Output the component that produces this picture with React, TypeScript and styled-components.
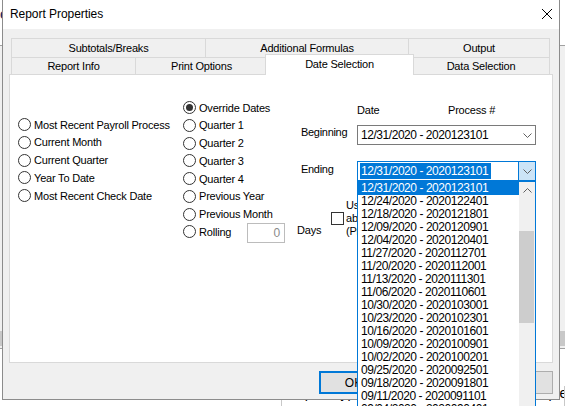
import React from "react";
import styled, { createGlobalStyle } from "styled-components";

const Global = createGlobalStyle`
  html, body { margin: 0; padding: 0; width: 565px; height: 406px; overflow: hidden; background: #fff; }
  body { font-family: "Liberation Sans", Arial, sans-serif; font-size: 11px; color: #000; }
  #root { width: 565px; height: 406px; }
  * { box-sizing: border-box; }
`;

const FONT = `"Liberation Sans", Arial, sans-serif`;

/* ---------- background application ---------- */
const Desktop = styled.div`
  position: relative;
  width: 565px;
  height: 406px;
  overflow: hidden;
  display: flex;
  flex-direction: column;
  background: #fff;
`;
const AppTop = styled.div`
  height: 47px;
  background: #fff;
  border-bottom: 1px solid #a0a0a0;
  color: #1b2a6b;
  font-weight: bold;
  font-size: 14px;
  padding: 6px 0 0 0;
`;
const AppMain = styled.div`
  height: 295px;
  background: #f0f0f0;
`;
const AppBar = styled.div`
  height: 16px;
  background: #c8c8c8;
`;
const AppSep = styled.div`
  height: 3px;
  border-bottom: 1px solid #a0a0a0;
  background: #f0f0f0;
`;
const AppGrid = styled.div`
  flex: 1;
  background: #fff;
  display: flex;
  align-items: flex-start;
  padding-top: 37px;
`;
const AppCol = styled.div<{ $w: number }>`
  width: ${(p) => p.$w}px;
  padding-left: 5px;
  font-size: 14px;
  line-height: 14px;
  border-right: 1px solid #c8c8c8;
  height: 20px;
  white-space: nowrap;
  overflow: hidden;
`;

/* ---------- dialog ---------- */
const Dialog = styled.div`
  position: absolute;
  left: 2px;
  top: 0;
  width: 558px;
  height: 400px;
  border: 1px solid #8c8c8c;
  border-top: none;
  background: #f0f0f0;
  display: flex;
  flex-direction: column;
  font-family: ${FONT};
`;
const TitleBar = styled.div`
  height: 29px;
  background: #fff;
  display: flex;
  align-items: center;
  justify-content: space-between;
  padding: 0 7px 1px 7px;
  font-size: 12px;
  letter-spacing: -0.05px;
`;
const CloseBox = styled.div`
  width: 10px;
  height: 10px;
  margin-right: 0px;
  display: flex;
`;
const Body = styled.div`
  flex: 1;
  padding: 9px 6px 0 6px;
  display: flex;
  flex-direction: column;
`;
const TabRow = styled.div<{ $h: number }>`
  display: flex;
  margin: 0 2px;
  height: ${(p) => p.$h}px;
`;
const Tab = styled.div<{ $w: number; $sel?: boolean; $last?: boolean }>`
  width: ${(p) => p.$w + (p.$sel ? 4 : 0)}px;
  margin: ${(p) => (p.$sel ? "-3px -2px -1px -2px" : "0")};
  position: relative;
  z-index: ${(p) => (p.$sel ? 2 : 1)};
  background: ${(p) => (p.$sel ? "#fff" : "#f0f0f0")};
  border-top: 1px solid #d9d9d9;
  border-left: 1px solid #d9d9d9;
  border-right: ${(p) => (p.$last || p.$sel ? "1px solid #d9d9d9" : "none")};
  display: flex;
  align-items: ${(p) => (p.$sel ? "flex-start" : "center")};
  padding-top: ${(p) => (p.$sel ? "2px" : "0")};
  justify-content: center;
  font-size: 11px;
  letter-spacing: -0.2px;
  line-height: 14px;
`;
const Panel = styled.div`
  height: 289px;
  background: #fff;
  border: 1px solid #d9d9d9;
  display: flex;
  align-items: flex-start;
  padding-left: 8px;
`;

/* radio groups */
const RadioGroup = styled.div<{ $w: number; $top: number }>`
  width: ${(p) => p.$w}px;
  margin-top: ${(p) => p.$top}px;
  display: flex;
  flex-direction: column;
`;
const RadioRow = styled.div`
  height: 17.75px;
  display: flex;
  align-items: center;
  font-size: 11px;
  letter-spacing: -0.2px;
  white-space: nowrap;
`;
const RadioCircle = styled.span<{ $on?: boolean }>`
  width: 13px;
  height: 13px;
  border-radius: 50%;
  border: 1px solid #333;
  background: #fff;
  display: flex;
  align-items: center;
  justify-content: center;
  flex-shrink: 0;
  margin-right: 3px;
  &::after {
    content: "";
    display: ${(p) => (p.$on ? "block" : "none")};
    width: 7px;
    height: 7px;
    border-radius: 50%;
    background: #333;
  }
`;
const RadioLabel = styled.span<{ $w?: number }>`
  display: inline-block;
  width: ${(p) => (p.$w ? `${p.$w}px` : "auto")};
`;
const NumBox = styled.div`
  width: 38px;
  height: 20px;
  border: 1px solid #bcbcbc;
  background: #fff;
  color: #8a8a8a;
  font-size: 12px;
  display: flex;
  align-items: center;
  justify-content: flex-end;
  padding-right: 4px;
  margin-top: 2px;
`;

/* right area */
const RightArea = styled.div`
  display: flex;
  flex-direction: column;
  width: 240px;
`;
const HeaderRow = styled.div`
  margin-top: 28px;
  height: 14px;
  line-height: 14px;
  padding-left: 60px;
  display: flex;
  font-size: 11px;
  letter-spacing: -0.2px;
`;
const HeaderCell = styled.span<{ $w?: number }>`
  width: ${(p) => (p.$w ? `${p.$w}px` : "auto")};
`;
const FieldRow = styled.div<{ $top: number }>`
  margin-top: ${(p) => p.$top}px;
  display: flex;
  align-items: flex-start;
`;
const FieldLabel = styled.span<{ $pt: number }>`
  width: 60px;
  padding-left: 4px;
  padding-top: ${(p) => p.$pt}px;
  line-height: 14px;
  font-size: 11px;
  letter-spacing: -0.3px;
`;
const Combo = styled.div<{ $focus?: boolean }>`
  position: relative;
  width: 179px;
  height: 20px;
  border: 1px solid ${(p) => (p.$focus ? "#0078d7" : "#7a7a7a")};
  background: #fff;
  display: flex;
  align-items: stretch;
`;
const ComboText = styled.div`
  flex: 1;
  display: flex;
  align-items: center;
  padding-left: 2px;
  font-size: 12px;
  letter-spacing: -0.45px;
  white-space: nowrap;
`;
const SelText = styled.span<{ $on?: boolean }>`
  padding: 1px ${(p) => (p.$on ? "3px 1px 1px" : "1px")};
  line-height: 14px;
  background: ${(p) => (p.$on ? "#0078d7" : "transparent")};
  color: ${(p) => (p.$on ? "#fff" : "#000")};
`;
const ComboButton = styled.div<{ $focus?: boolean }>`
  width: 17px;
  display: flex;
  align-items: center;
  justify-content: center;
  background: ${(p) => (p.$focus ? "#cce4f7" : "transparent")};
  border-left: 1px solid ${(p) => (p.$focus ? "#0078d7" : "transparent")};
`;
const DropList = styled.div`
  position: absolute;
  z-index: 20;
  left: -1px;
  top: 19px;
  width: 179px;
  height: 240px;
  background: #fff;
  border: 1px solid #0078d7;
  display: flex;
  overflow: hidden;
`;
const ListItems = styled.div`
  flex: 1;
  display: flex;
  flex-direction: column;
`;
const ListItem = styled.div<{ $sel?: boolean }>`
  height: 13px;
  line-height: 13px;
  padding-left: 3px;
  font-size: 12px;
  letter-spacing: -0.45px;
  white-space: nowrap;
  background: ${(p) => (p.$sel ? "#0078d7" : "transparent")};
  color: ${(p) => (p.$sel ? "#fff" : "#000")};
`;
const ScrollBar = styled.div`
  width: 16px;
  background: #f0f0f0;
  display: flex;
  flex-direction: column;
`;
const ScrollArrow = styled.div`
  height: 17px;
  display: flex;
  align-items: center;
  justify-content: center;
`;
const ScrollThumb = styled.div`
  margin: 32px 1px 0 0;
  height: 92px;
  background: #cdcdcd;
`;

const BottomBlock = styled.div`
  margin-top: 17.5px;
  display: flex;
  align-items: flex-start;
`;
const DaysLabel = styled.span`
  width: 34px;
  margin-top: 24.5px;
  line-height: 14px;
  font-size: 11px;
  letter-spacing: -0.2px;
`;
const CheckBox = styled.span`
  width: 13px;
  height: 13px;
  border: 1px solid #333;
  background: #fff;
  margin-top: 13.5px;
  margin-right: 2px;
  flex-shrink: 0;
`;
const CheckLabel = styled.span`
  font-size: 11px;
  line-height: 13px;
  letter-spacing: -0.2px;
  white-space: nowrap;
`;

/* buttons */
const ButtonRow = styled.div`
  margin-top: 8px;
  display: flex;
  justify-content: flex-end;
  gap: 4.5px;
`;
const Button = styled.div<{ $default?: boolean }>`
  width: 75px;
  height: 23px;
  background: #e1e1e1;
  border: ${(p) => (p.$default ? "2px solid #0078d7" : "1px solid #adadad")};
  display: flex;
  align-items: center;
  justify-content: center;
  font-size: 12px;
  padding-right: 6px;
`;

const Chevron = ({ up }: { up?: boolean }) => (
  <svg width="9" height="5" viewBox="0 0 9 5">
    <path
      d={up ? "M0.5 4.5 L4.5 0.5 L8.5 4.5" : "M0.5 0.5 L4.5 4.5 L8.5 0.5"}
      fill="none"
      stroke="#606060"
      strokeWidth="1"
    />
  </svg>
);

const dates: [string, string][] = [
  ["12/31/2020", "2020123101"],
  ["12/24/2020", "2020122401"],
  ["12/18/2020", "2020121801"],
  ["12/09/2020", "2020120901"],
  ["12/04/2020", "2020120401"],
  ["11/27/2020", "2020112701"],
  ["11/20/2020", "2020112001"],
  ["11/13/2020", "2020111301"],
  ["11/06/2020", "2020110601"],
  ["10/30/2020", "2020103001"],
  ["10/23/2020", "2020102301"],
  ["10/16/2020", "2020101601"],
  ["10/09/2020", "2020100901"],
  ["10/02/2020", "2020100201"],
  ["09/25/2020", "2020092501"],
  ["09/18/2020", "2020091801"],
  ["09/11/2020", "2020091101"],
  ["09/04/2020", "2020090401"],
  ["08/28/2020", "2020082801"],
];

const leftRadios = [
  "Most Recent Payroll Process",
  "Current Month",
  "Current Quarter",
  "Year To Date",
  "Most Recent Check Date",
];
const midRadios = [
  "Override Dates",
  "Quarter 1",
  "Quarter 2",
  "Quarter 3",
  "Quarter 4",
  "Previous Year",
  "Previous Month",
];

export default function App() {
  return (
    <>
      <Global />
      <Desktop>
        <AppTop>e</AppTop>
        <AppMain />
        <AppBar />
        <AppSep />
        <AppGrid>
          <AppCol $w={287}>Name</AppCol>
          <AppCol $w={248}>Report Type</AppCol>
          <AppCol $w={40}>Copies</AppCol>
        </AppGrid>

        <Dialog>
          <TitleBar>
            <span>Report Properties</span>
            <CloseBox>
              <svg width="10" height="10" viewBox="0 0 10 10">
                <path d="M0 0 L10 10 M10 0 L0 10" stroke="#000" strokeWidth="1" />
              </svg>
            </CloseBox>
          </TitleBar>
          <Body>
            <TabRow $h={19}>
              <Tab $w={194}>Subtotals/Breaks</Tab>
              <Tab $w={203}>Additional Formulas</Tab>
              <Tab $w={142} $last>
                Output
              </Tab>
            </TabRow>
            <TabRow $h={17}>
              <Tab $w={124}>Report Info</Tab>
              <Tab $w={132}>Print Options</Tab>
              <Tab $w={145} $sel>
                Date Selection
              </Tab>
              <Tab $w={138} $last>
                Data Selection
              </Tab>
            </TabRow>
            <Panel>
              <RadioGroup $w={165} $top={40.8}>
                {leftRadios.map((l) => (
                  <RadioRow key={l}>
                    <RadioCircle />
                    <RadioLabel>{l}</RadioLabel>
                  </RadioRow>
                ))}
              </RadioGroup>
              <RadioGroup $w={114} $top={23.8}>
                {midRadios.map((l, i) => (
                  <RadioRow key={l}>
                    <RadioCircle $on={i === 0} />
                    <RadioLabel>{l}</RadioLabel>
                  </RadioRow>
                ))}
                <RadioRow>
                  <RadioCircle />
                  <RadioLabel $w={48}>Rolling</RadioLabel>
                  <NumBox>0</NumBox>
                </RadioRow>
              </RadioGroup>
              <RightArea>
                <HeaderRow>
                  <HeaderCell $w={91}>Date</HeaderCell>
                  <HeaderCell>Process #</HeaderCell>
                </HeaderRow>
                <FieldRow $top={8}>
                  <FieldLabel $pt={0}>Beginning</FieldLabel>
                  <Combo>
                    <ComboText>
                      <SelText>12/31/2020 - 2020123101</SelText>
                    </ComboText>
                    <ComboButton>
                      <Chevron />
                    </ComboButton>
                  </Combo>
                </FieldRow>
                <FieldRow $top={16}>
                  <FieldLabel $pt={1}>Ending</FieldLabel>
                  <Combo $focus>
                    <ComboText>
                      <SelText $on>12/31/2020 - 2020123101</SelText>
                    </ComboText>
                    <ComboButton $focus>
                      <Chevron />
                    </ComboButton>
                    <DropList>
                      <ListItems>
                        {dates.map(([d, p], i) => (
                          <ListItem key={p} $sel={i === 0}>
                            {d} - {p}
                          </ListItem>
                        ))}
                      </ListItems>
                      <ScrollBar>
                        <ScrollArrow>
                          <Chevron up />
                        </ScrollArrow>
                        <ScrollThumb />
                      </ScrollBar>
                    </DropList>
                  </Combo>
                </FieldRow>
                <BottomBlock>
                  <DaysLabel>Days</DaysLabel>
                  <CheckBox />
                  <CheckLabel>
                    Use Process #
                    <br />
                    above dates
                    <br />
                    (Process Date)
                  </CheckLabel>
                </BottomBlock>
              </RightArea>
            </Panel>
            <ButtonRow>
              <Button $default>OK</Button>
              <Button>Cancel</Button>
              <Button>Apply</Button>
            </ButtonRow>
          </Body>
        </Dialog>
      </Desktop>
    </>
  );
}
